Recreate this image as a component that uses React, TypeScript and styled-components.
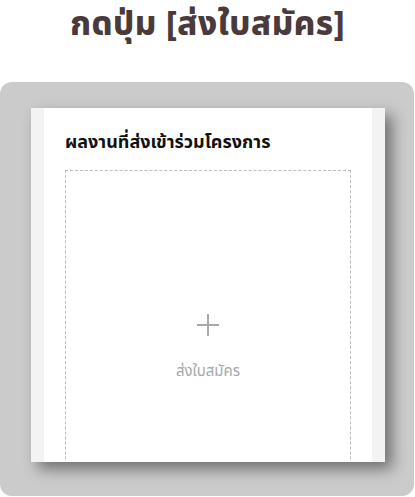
import React from 'react'
import styled, {createGlobalStyle} from "styled-components";

const GlobalStyle = createGlobalStyle`
  html, body {
    margin: 0;
    padding: 0;
    background: #ffffff;
  }
  body {
    font-family: "Noto Sans", "Noto Sans Thai", "DejaVu Sans", sans-serif;
  }
`

export default function App() {
    return (
        <Page>
            <GlobalStyle/>
            <Heading>กดปุ่ม [ส่งใบสมัคร]</Heading>
            <Frame>
                <Card>
                    <Side/>
                    <Content>
                        <Title>ผลงานที่ส่งเข้าร่วมโครงการ</Title>
                        <DropZone>
                            <PlusIcon width="22" height="22" viewBox="0 0 22 22">
                                <path d="M11 0 V22 M0 11 H22" stroke="#a9a9a9" strokeWidth="2" fill="none"/>
                            </PlusIcon>
                            <DropLabel>ส่งใบสมัคร</DropLabel>
                        </DropZone>
                    </Content>
                    <Side/>
                </Card>
            </Frame>
        </Page>
    )
}

const Page = styled.div`
  width: 415px;
  height: 497px;
  display: flex;
  flex-direction: column;
  overflow: hidden;
`

const Heading = styled.h1`
  margin: 0;
  height: 82px;
  flex: none;
  padding-top: 0;
  box-sizing: border-box;
  text-align: center;
  font-size: 33px;
  font-weight: 800;
  letter-spacing: 0.5px;
  color: #4a3a3b;
  line-height: 46px;
`

const Frame = styled.div`
  width: 414px;
  height: 414px;
  flex: none;
  box-sizing: border-box;
  padding: 26px 29px 0 31px;
  background: #cbcbcb;
  border-radius: 12px;
`

const Card = styled.div`
  height: 354px;
  display: flex;
  background: #ffffff;
  overflow: hidden;
  box-shadow: 7px 7px 14px rgba(0, 0, 0, 0.45);
`

const Side = styled.div`
  width: 13px;
  flex: none;
  background: #f3f3f3;
`

const Content = styled.div`
  flex: 1;
  padding: 20px 21px 0;
  display: flex;
  flex-direction: column;
`

const Title = styled.div`
  flex: none;
  font-size: 18px;
  font-weight: 700;
  color: #111111;
  line-height: 26px;
  height: 42px;
`

const DropZone = styled.div`
  flex: none;
  height: 360px;
  border: 1px dashed #bdbdbd;
  display: flex;
  flex-direction: column;
  align-items: center;
  padding-top: 143px;
  box-sizing: border-box;
`

const PlusIcon = styled.svg`
  display: block;
`

const DropLabel = styled.div`
  margin-top: 24px;
  font-size: 15px;
  color: #a8a8a8;
`
